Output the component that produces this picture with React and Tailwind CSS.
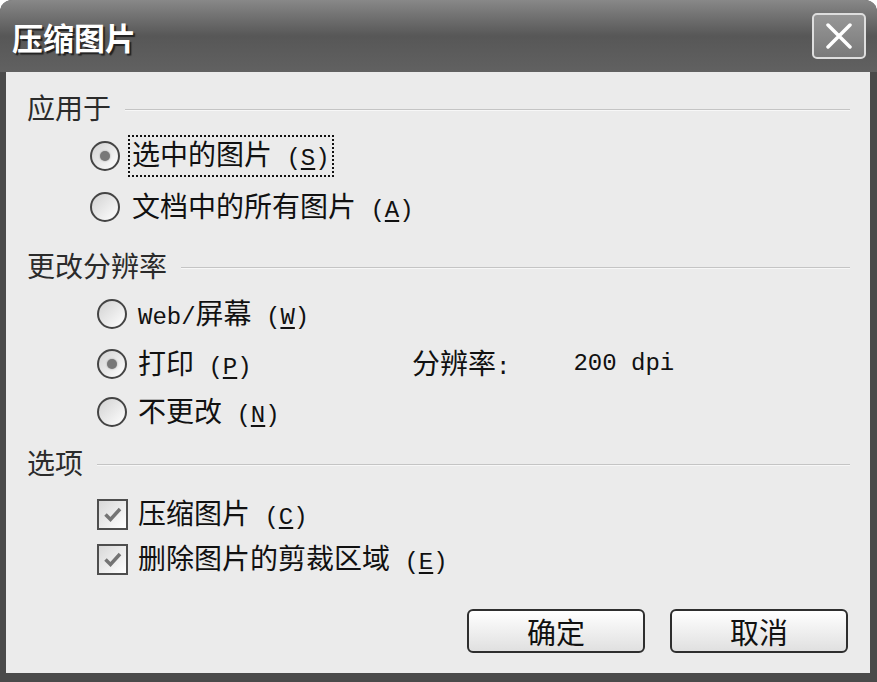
import React from "react";

const cjk = "font-['Noto_Sans_CJK_SC','Noto_Sans_CJK_TC',sans-serif]";
const mono = "font-['Liberation_Mono','DejaVu_Sans_Mono',monospace]";

function Key({ k }) {
  return (
    <span className={`${mono} whitespace-pre text-[24px]`}>
      {" ("}
      <span className="underline underline-offset-[3px]">{k}</span>)
    </span>
  );
}

function Radio({ checked }) {
  return (
    <span className="flex h-[30px] w-[30px] shrink-0 items-center justify-center rounded-full border-2 border-[#444] bg-linear-to-br from-[#d2d2d2] to-white">
      {checked && <span className="h-[10px] w-[10px] rounded-full bg-[#787878] shadow-[0_0_2px_#999]" />}
    </span>
  );
}

function Check() {
  return (
    <span className="flex h-[31px] w-[31px] shrink-0 items-center justify-center border-2 border-[#4e4e4e] bg-linear-to-br from-[#d8d8d8] to-white">
      <svg width="20" height="17" viewBox="0 0 20 17">
        <path d="M2.5 8.5 L7.5 13.5 L17 3" fill="none" stroke="#747474" strokeWidth="3.5" />
      </svg>
    </span>
  );
}

function Header({ children, className = "" }) {
  return (
    <div className={`flex h-[30px] items-center pl-[21px] pr-[20px] ${className}`}>
      <span className="text-[28px] leading-none text-[#2b2b2b]">{children}</span>
      <div className="ml-[14px] mt-[6px] h-[2px] flex-1 border-t border-[#c4c4c4] bg-[#f7f7f7]" />
    </div>
  );
}

export default function App() {
  return (
    <div className={`h-[682px] w-[877px] bg-white ${cjk}`}>
      <div className="flex h-full flex-col rounded-t-[12px] bg-[#4a4a4a]">
        {/* title bar */}
        <div className="flex h-[72px] shrink-0 items-center justify-between rounded-t-[12px] bg-linear-to-b from-[#888] via-[#575757] to-[#616161] pl-[12px] pr-[11px]">
          <span className="text-[31px] font-bold leading-none text-white [text-shadow:2px_2px_1px_#222]">
            压缩图片
          </span>
          <button className="flex h-[46px] w-[54px] items-center justify-center rounded-[5px] border-2 border-[#dedede] bg-linear-to-b from-[#979797] to-[#7a7a7a]">
            <svg width="26" height="26" viewBox="0 0 26 26">
              <path d="M2 2 L24 24 M24 2 L2 24" stroke="white" strokeWidth="3.5" strokeLinecap="round" />
            </svg>
          </button>
        </div>

        {/* client area */}
        <div className="mb-[9px] ml-[6px] mr-[7px] flex flex-1 flex-col bg-[#ebebeb] text-[28px] leading-none text-[#111]">
          <Header className="mt-[20px]">应用于</Header>

          <div className="mt-[19px] flex h-[30px] items-center gap-[8px] pl-[84px]">
            <Radio checked />
            <span className="border-2 border-dotted border-[#111] px-[2px] leading-[33px]">
              选中的图片<Key k="S" />
            </span>
          </div>
          <div className="mt-[21px] flex h-[30px] items-center gap-[12px] pl-[84px]">
            <Radio />
            <span>
              文档中的所有图片<Key k="A" />
            </span>
          </div>

          <Header className="mt-[28px]">更改分辨率</Header>

          <div className="mt-[19px] flex h-[30px] items-center gap-[11px] pl-[91px]">
            <Radio />
            <span>
              <span className={`${mono} text-[24px]`}>Web/</span>屏幕<Key k="W" />
            </span>
          </div>
          <div className="mt-[20px] flex h-[30px] items-center pl-[91px]">
            <div className="flex w-[315px] items-center gap-[11px]">
              <Radio checked />
              <span>
                打印<Key k="P" />
              </span>
            </div>
            <span>
              分辨率<span className={`${mono} text-[24px]`}>:</span>
            </span>
            <span className={`${mono} ml-[63px] text-[24px]`}>200 dpi</span>
          </div>
          <div className="mt-[18px] flex h-[30px] items-center gap-[11px] pl-[91px]">
            <Radio />
            <span>
              不更改<Key k="N" />
            </span>
          </div>

          <Header className="mt-[20px]">选项</Header>

          <div className="mt-[22px] flex h-[30px] items-center gap-[10px] pl-[91px]">
            <Check />
            <span>
              压缩图片<Key k="C" />
            </span>
          </div>
          <div className="mt-[15px] flex h-[30px] items-center gap-[10px] pl-[91px]">
            <Check />
            <span>
              删除图片的剪裁区域<Key k="E" />
            </span>
          </div>

          <div className="mt-[35px] flex justify-end gap-[25px] pr-[22px]">
            <button className="h-[44px] w-[178px] rounded-[6px] border-2 border-[#2e2e2e] bg-linear-to-b from-white to-[#e0e0e0] text-[29px] leading-none text-[#111]">
              确定
            </button>
            <button className="h-[44px] w-[178px] rounded-[6px] border-2 border-[#2e2e2e] bg-linear-to-b from-white to-[#e0e0e0] text-[29px] leading-none text-[#111]">
              取消
            </button>
          </div>
        </div>
      </div>
    </div>
  );
}
